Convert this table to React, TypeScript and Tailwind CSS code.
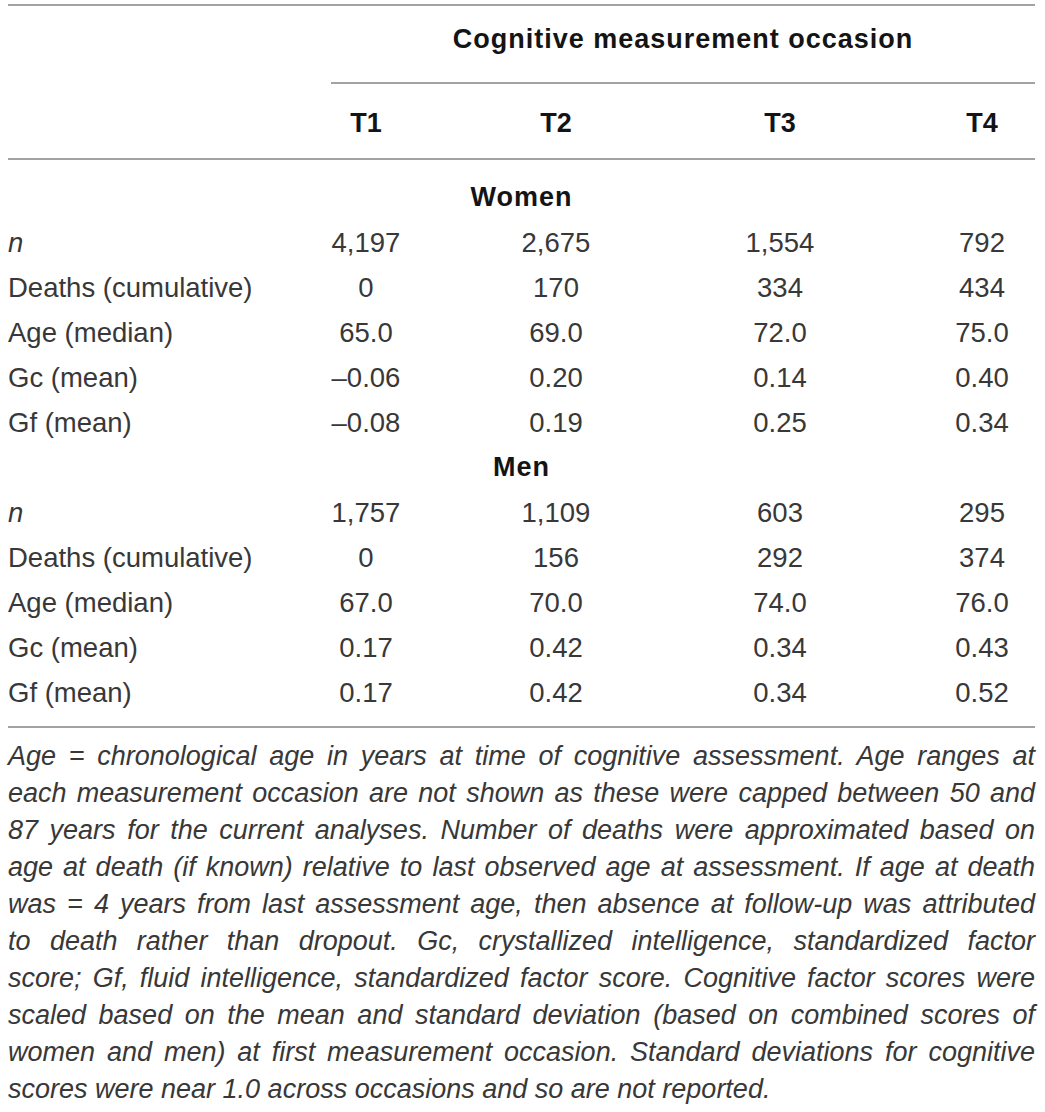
import React from "react";

type Row = { label: React.ReactNode; v: string[] };

const women: Row[] = [
  { label: <i>n</i>, v: ["4,197", "2,675", "1,554", "792"] },
  { label: "Deaths (cumulative)", v: ["0", "170", "334", "434"] },
  { label: "Age (median)", v: ["65.0", "69.0", "72.0", "75.0"] },
  { label: "Gc (mean)", v: ["–0.06", "0.20", "0.14", "0.40"] },
  { label: "Gf (mean)", v: ["–0.08", "0.19", "0.25", "0.34"] },
];

const men: Row[] = [
  { label: <i>n</i>, v: ["1,757", "1,109", "603", "295"] },
  { label: "Deaths (cumulative)", v: ["0", "156", "292", "374"] },
  { label: "Age (median)", v: ["67.0", "70.0", "74.0", "76.0"] },
  { label: "Gc (mean)", v: ["0.17", "0.42", "0.34", "0.43"] },
  { label: "Gf (mean)", v: ["0.17", "0.42", "0.34", "0.52"] },
];

const notes = [
  "Age = chronological age in years at time of cognitive assessment. Age ranges at",
  "each measurement occasion are not shown as these were capped between 50 and",
  "87 years for the current analyses. Number of deaths were approximated based on",
  "age at death (if known) relative to last observed age at assessment. If age at death",
  "was = 4 years from last assessment age, then absence at follow-up was attributed",
  "to death rather than dropout. Gc, crystallized intelligence, standardized factor",
  "score; Gf, fluid intelligence, standardized factor score. Cognitive factor scores were",
  "scaled based on the mean and standard deviation (based on combined scores of",
  "women and men) at first measurement occasion. Standard deviations for cognitive",
];

const grid = "grid grid-cols-[243px_230px_150px_298px_106px]";

function DataRow({ r }: { r: Row }) {
  return (
    <div className={`${grid} h-[45px] items-center leading-[45px]`}>
      <div className="whitespace-nowrap">{r.label}</div>
      {r.v.map((x, i) => (
        <div key={i} className="text-center whitespace-nowrap">
          {x}
        </div>
      ))}
    </div>
  );
}

function Rule() {
  return <div className="h-[2px] bg-[#a3a3a3]" />;
}

export default function App() {
  return (
    <div className="bg-white w-[1045px] min-h-[1112px] pt-[4px] pl-[8px] pr-[10px] font-['Liberation_Sans',Arial,sans-serif] text-[27.5px] text-[#383838]">
      <Rule />
      <div className="h-[76px] pt-[11px]">
        <div className="ml-[323px] text-center font-bold text-[27px] text-[#141414] leading-[45px] tracking-[1px]">
          Cognitive measurement occasion
        </div>
      </div>
      <div className="ml-[323px] h-[2px] bg-[#a3a3a3]" />
      <div className={`${grid} h-[74px] pt-[17px] font-bold text-[27px] text-[#141414] leading-[45px]`}>
        <div />
        <div className="text-center">T1</div>
        <div className="text-center">T2</div>
        <div className="text-center">T3</div>
        <div className="text-center">T4</div>
      </div>
      <Rule />
      <div className="pt-[15px] pb-[11px]">
        <div className="h-[45px] leading-[45px] text-center font-bold text-[27px] text-[#141414] tracking-[1px]">
          Women
        </div>
        {women.map((r, i) => (
          <DataRow key={i} r={r} />
        ))}
        <div className="h-[45px] leading-[45px] text-center font-bold text-[27px] text-[#141414] tracking-[1px]">
          Men
        </div>
        {men.map((r, i) => (
          <DataRow key={i} r={r} />
        ))}
      </div>
      <Rule />
      <div className="pt-[10px] italic text-[27px] leading-[37px]">
        {notes.map((t, i) => (
          <div key={i} className="text-justify [text-align-last:justify]">
            {t}
          </div>
        ))}
        <div>scores were near 1.0 across occasions and so are not reported.</div>
      </div>
    </div>
  );
}
